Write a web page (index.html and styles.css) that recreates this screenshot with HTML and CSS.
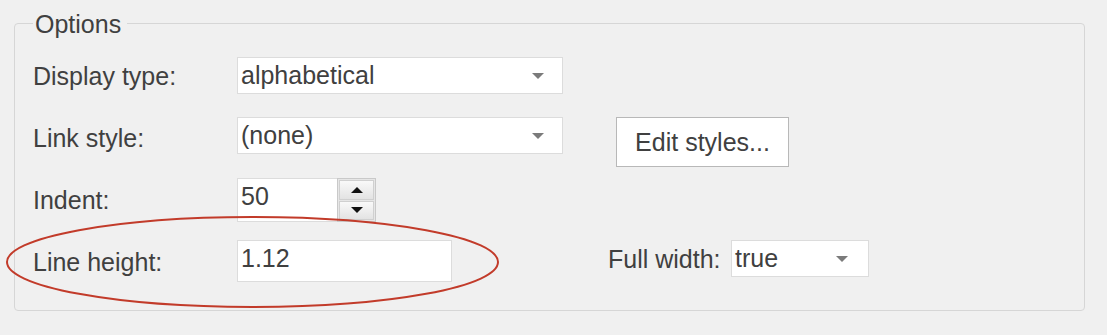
FILE: index.html
```html
<!DOCTYPE html>
<html lang="en">

<head>
    <meta charset="UTF-8">
    <meta name="viewport" content="width=device-width, initial-scale=1.0">
    <title>Options</title>
    <link rel="stylesheet" href="styles.css">
</head>

<body>
    <fieldset class="options">
        <legend>Options</legend>

        <div class="row">
            <div class="field">
                <label class="label">Display type:</label>
                <div class="select">
                    <span>alphabetical</span>
                    <span class="caret"></span>
                </div>
            </div>
        </div>

        <div class="row row-2">
            <div class="field">
                <label class="label label-low">Link style:</label>
                <div class="select">
                    <span>(none)</span>
                    <span class="caret"></span>
                </div>
            </div>
            <button class="btn">Edit styles...</button>
        </div>

        <div class="row row-3">
            <div class="field">
                <label class="label label-high">Indent:</label>
                <div class="spin">
                    <input class="spin-input" type="text" value="50">
                    <div class="spin-btns">
                        <span class="spin-btn"><i class="tri-up"></i></span>
                        <span class="spin-btn"><i class="tri-down"></i></span>
                    </div>
                </div>
            </div>
        </div>

        <div class="row row-4">
            <div class="field">
                <label class="label">Line height:</label>
                <input class="text-input" type="text" value="1.12">
            </div>
            <div class="field field-right">
                <label class="label label-inline">Full width:</label>
                <div class="select select-small">
                    <span>true</span>
                    <span class="caret"></span>
                </div>
            </div>
        </div>
    </fieldset>

    <!-- 标注圈 -->
    <svg class="mark" width="1107" height="335" viewBox="0 0 1107 335">
        <ellipse cx="252.5" cy="262" rx="245.5" ry="45" fill="none" stroke="#c23b2a" stroke-width="2"></ellipse>
    </svg>
</body>

</html>
```

FILE: styles.css
```css
* {
    margin: 0;
    padding: 0;
    box-sizing: border-box;
}

body {
    background-color: #f0f0f0;
    padding: 8px 22px 0 14px;
    font-family: "Liberation Sans", Arial, sans-serif;
    font-size: 25px;
    color: #404040;
}

.options {
    border: 1px solid #d6d6d6;
    border-radius: 4px;
    padding: 19px 18px 28px;
    min-width: 0;
}

.options legend {
    padding: 2px 6px 0 2px;
    line-height: 28px;
}

.row {
    display: flex;
    align-items: flex-start;
}

.row-2 {
    margin-top: 23px;
}

.row-3 {
    margin-top: 11px;
}

.row-4 {
    margin-top: 18px;
}

.field {
    display: flex;
    align-items: center;
}

.label {
    width: 204px;
    padding-top: 2px;
}

.label-low {
    padding-top: 6px;
}

.label-high {
    padding-top: 0;
}

.field-right {
    margin-left: 156px;
}

.label-inline {
    width: 123px;
}

/* 下拉框 */
.select {
    width: 326px;
    height: 37px;
    border: 1px solid #dcdcdc;
    background-color: #fff;
    display: flex;
    align-items: center;
    justify-content: space-between;
    padding: 0 18px 0 3px;
}

.select-small {
    width: 138px;
    padding-right: 20px;
}

.caret {
    width: 0;
    height: 0;
    border-left: 6px solid transparent;
    border-right: 6px solid transparent;
    border-top: 6px solid #7b7b7b;
}

.btn {
    width: 173px;
    height: 50px;
    margin-left: 53px;
    border: 1px solid #b8b8b8;
    background-color: #fff;
    font-family: inherit;
    font-size: inherit;
    color: inherit;
}

/* 输入框 */
.text-input,
.spin-input {
    border: 1px solid #dcdcdc;
    background-color: #fff;
    font-family: inherit;
    font-size: inherit;
    color: inherit;
    line-height: 28px;
    outline: none;
}

.text-input {
    width: 215px;
    height: 42px;
    padding: 3px 4px 9px 3px;
}

.spin {
    display: flex;
    height: 44px;
}

.spin-input {
    width: 100px;
    height: 44px;
    border-right: none;
    padding: 3px 4px 11px 3px;
}

.spin-btns {
    width: 39px;
    border: 1px solid #c9c9c9;
    background-color: #e6e6e6;
    padding: 1px;
    display: flex;
    flex-direction: column;
    gap: 1px;
}

.spin-btn {
    flex: 1;
    border: 1px solid #d0d0d0;
    background: linear-gradient(#f9f9f9, #e3e3e3);
    display: flex;
    align-items: center;
    justify-content: center;
}

.tri-up,
.tri-down {
    width: 0;
    height: 0;
    border-left: 6px solid transparent;
    border-right: 6px solid transparent;
}

.tri-up {
    border-bottom: 6px solid #111;
}

.tri-down {
    border-top: 6px solid #111;
}

.mark {
    position: absolute;
    left: 0;
    top: 0;
    pointer-events: none;
}
```
